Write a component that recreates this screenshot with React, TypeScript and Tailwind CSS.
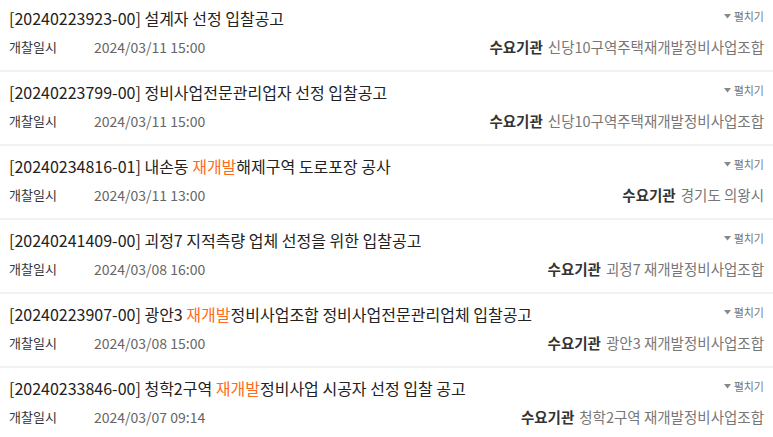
import React from "react";

type Bid = {
  no: string;
  title: React.ReactNode;
  date: string;
  org: string;
};

const hl = (s: string) => <span className="text-[#ff6b1a]">{s}</span>;

const bids: Bid[] = [
  { no: "20240223923-00", title: "설계자 선정 입찰공고", date: "2024/03/11 15:00", org: "신당10구역주택재개발정비사업조합" },
  { no: "20240223799-00", title: "정비사업전문관리업자 선정 입찰공고", date: "2024/03/11 15:00", org: "신당10구역주택재개발정비사업조합" },
  { no: "20240234816-01", title: <>내손동 {hl("재개발")}해제구역 도로포장 공사</>, date: "2024/03/11 13:00", org: "경기도 의왕시" },
  { no: "20240241409-00", title: "괴정7 지적측량 업체 선정을 위한 입찰공고", date: "2024/03/08 16:00", org: "괴정7 재개발정비사업조합" },
  { no: "20240223907-00", title: <>광안3 {hl("재개발")}정비사업조합 정비사업전문관리업체 입찰공고</>, date: "2024/03/08 15:00", org: "광안3 재개발정비사업조합" },
  { no: "20240233846-00", title: <>청학2구역 {hl("재개발")}정비사업 시공자 선정 입찰 공고</>, date: "2024/03/07 09:14", org: "청학2구역 재개발정비사업조합" },
];

function BidRow({ bid }: { bid: Bid }) {
  return (
    <div className="flex h-[74px] flex-col border-b-2 border-[#f2f2f2] px-[9px] pt-[9px]">
      <div className="flex items-start justify-between">
        <p className="text-[16px] leading-[22px] text-[#222]">
          [{bid.no}] {bid.title}
        </p>
        <button className="mt-[2px] flex items-center gap-[3px] text-[11px] leading-[14px] text-[#777]">
          <svg width="7" height="5" viewBox="0 0 7 5">
            <path d="M0 0h7L3.5 4.5z" fill="#888" />
          </svg>
          펼치기
        </button>
      </div>
      <div className="mt-[8px] flex items-center justify-between text-[14px] leading-[20px]">
        <div className="flex items-center">
          <span className="w-[85px] text-[13px] text-[#333]">개찰일시</span>
          <span className="text-[#666]">{bid.date}</span>
        </div>
        <div className="flex items-center gap-[5px] text-[14.5px]">
          <span className="font-bold text-[#333]">수요기관</span>
          <span className="text-[#777]">{bid.org}</span>
        </div>
      </div>
    </div>
  );
}

export default function App() {
  return (
    <div
      className="-mt-[2px] w-[773px] bg-white"
      style={{ fontFamily: '"Noto Sans CJK KR", "Noto Sans", sans-serif' }}
    >
      {bids.map((b) => (
        <BidRow key={b.no} bid={b} />
      ))}
    </div>
  );
}
